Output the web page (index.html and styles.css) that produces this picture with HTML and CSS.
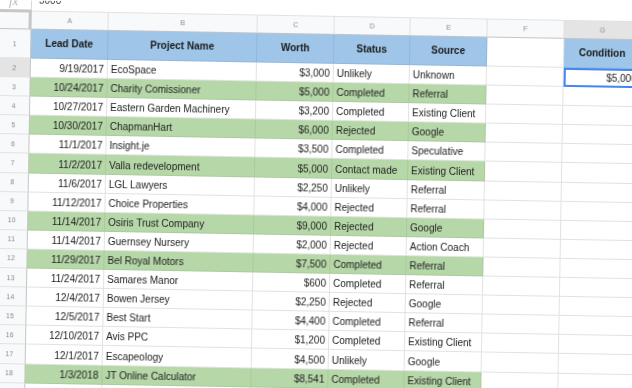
FILE: index.html
```html
<!DOCTYPE html>
<html>
<head>
<meta charset="utf-8">
<link rel="stylesheet" href="styles.css">
</head>
<body>
<div class="page">
  <div class="formula">
    <span class="fx">fx</span>
    <span class="fsep"></span>
    <span class="fval">5000</span>
  </div>
  <div class="sheet">
    <div class="row colhead">
      <div class="corner"></div>
      <div class="ch">A</div><div class="ch">B</div><div class="ch">C</div><div class="ch">D</div><div class="ch">E</div><div class="ch">F</div><div class="ch sel">G</div><div class="ch">H</div>
    </div>
    <div class="row head">
      <div class="rh">1</div>
      <div class="c hb">Lead Date</div><div class="c hb">Project Name</div><div class="c hb">Worth</div><div class="c hb">Status</div><div class="c hb">Source</div><div class="c"></div><div class="c hb">Condition</div><div class="c"></div>
    </div>
    <div class="row">
      <div class="rh sel">2</div>
      <div class="c r">9/19/2017</div><div class="c">EcoSpace</div><div class="c r">$3,000</div><div class="c">Unlikely</div><div class="c">Unknown</div><div class="c"></div><div class="c r cur">$5,000</div><div class="c"></div>
    </div>
    <div class="row">
      <div class="rh">3</div>
      <div class="c r g">10/24/2017</div><div class="c g">Charity Comissioner</div><div class="c r g">$5,000</div><div class="c g">Completed</div><div class="c g">Referral</div><div class="c"></div><div class="c"></div><div class="c"></div>
    </div>
    <div class="row">
      <div class="rh">4</div>
      <div class="c r">10/27/2017</div><div class="c">Eastern Garden Machinery</div><div class="c r">$3,200</div><div class="c">Completed</div><div class="c">Existing Client</div><div class="c"></div><div class="c"></div><div class="c"></div>
    </div>
    <div class="row">
      <div class="rh">5</div>
      <div class="c r g">10/30/2017</div><div class="c g">ChapmanHart</div><div class="c r g">$6,000</div><div class="c g">Rejected</div><div class="c g">Google</div><div class="c"></div><div class="c"></div><div class="c"></div>
    </div>
    <div class="row">
      <div class="rh">6</div>
      <div class="c r">11/1/2017</div><div class="c">Insight.je</div><div class="c r">$3,500</div><div class="c">Completed</div><div class="c">Speculative</div><div class="c"></div><div class="c"></div><div class="c"></div>
    </div>
    <div class="row">
      <div class="rh">7</div>
      <div class="c r g">11/2/2017</div><div class="c g">Valla redevelopment</div><div class="c r g">$5,000</div><div class="c g">Contact made</div><div class="c g">Existing Client</div><div class="c"></div><div class="c"></div><div class="c"></div>
    </div>
    <div class="row">
      <div class="rh">8</div>
      <div class="c r">11/6/2017</div><div class="c">LGL Lawyers</div><div class="c r">$2,250</div><div class="c">Unlikely</div><div class="c">Referral</div><div class="c"></div><div class="c"></div><div class="c"></div>
    </div>
    <div class="row">
      <div class="rh">9</div>
      <div class="c r">11/12/2017</div><div class="c">Choice Properties</div><div class="c r">$4,000</div><div class="c">Rejected</div><div class="c">Referral</div><div class="c"></div><div class="c"></div><div class="c"></div>
    </div>
    <div class="row">
      <div class="rh">10</div>
      <div class="c r g">11/14/2017</div><div class="c g">Osiris Trust Company</div><div class="c r g">$9,000</div><div class="c g">Rejected</div><div class="c g">Google</div><div class="c"></div><div class="c"></div><div class="c"></div>
    </div>
    <div class="row">
      <div class="rh">11</div>
      <div class="c r">11/14/2017</div><div class="c">Guernsey Nursery</div><div class="c r">$2,000</div><div class="c">Rejected</div><div class="c">Action Coach</div><div class="c"></div><div class="c"></div><div class="c"></div>
    </div>
    <div class="row">
      <div class="rh">12</div>
      <div class="c r g">11/29/2017</div><div class="c g">Bel Royal Motors</div><div class="c r g">$7,500</div><div class="c g">Completed</div><div class="c g">Referral</div><div class="c"></div><div class="c"></div><div class="c"></div>
    </div>
    <div class="row">
      <div class="rh">13</div>
      <div class="c r">11/24/2017</div><div class="c">Samares Manor</div><div class="c r">$600</div><div class="c">Completed</div><div class="c">Referral</div><div class="c"></div><div class="c"></div><div class="c"></div>
    </div>
    <div class="row">
      <div class="rh">14</div>
      <div class="c r">12/4/2017</div><div class="c">Bowen Jersey</div><div class="c r">$2,250</div><div class="c">Rejected</div><div class="c">Google</div><div class="c"></div><div class="c"></div><div class="c"></div>
    </div>
    <div class="row">
      <div class="rh">15</div>
      <div class="c r">12/5/2017</div><div class="c">Best Start</div><div class="c r">$4,400</div><div class="c">Completed</div><div class="c">Referral</div><div class="c"></div><div class="c"></div><div class="c"></div>
    </div>
    <div class="row">
      <div class="rh">16</div>
      <div class="c r">12/10/2017</div><div class="c">Avis PPC</div><div class="c r">$1,200</div><div class="c">Completed</div><div class="c">Existing Client</div><div class="c"></div><div class="c"></div><div class="c"></div>
    </div>
    <div class="row">
      <div class="rh">17</div>
      <div class="c r">12/1/2017</div><div class="c">Escapeology</div><div class="c r">$4,500</div><div class="c">Unlikely</div><div class="c">Google</div><div class="c"></div><div class="c"></div><div class="c"></div>
    </div>
    <div class="row">
      <div class="rh">18</div>
      <div class="c r g">1/3/2018</div><div class="c g">JT Online Calculator</div><div class="c r g">$8,541</div><div class="c g">Completed</div><div class="c g">Existing Client</div><div class="c"></div><div class="c"></div><div class="c"></div>
    </div>
    <div class="row">
      <div class="rh">19</div>
      <div class="c"></div><div class="c"></div><div class="c"></div><div class="c"></div><div class="c"></div><div class="c"></div><div class="c"></div><div class="c"></div>
    </div>
  </div>
</div>
</body>
</html>
```
FILE: styles.css
```css
html, body {
  margin: 0;
  padding: 0;
  background: #ffffff;
  overflow: hidden;
}
body {
  width: 632px;
  height: 388px;
  font-family: "Liberation Sans", Arial, sans-serif;
  color: #222222;
}
.page {
  width: 700px;
  transform: rotate(1deg);
  transform-origin: 0 0;
  filter: blur(0.3px);
}
.formula {
  height: 10px;
  display: flex;
  align-items: flex-start;
  overflow: hidden;
  border-bottom: 1px solid #e2e2e2;
}
.fx {
  font-family: "Liberation Serif", serif;
  font-style: italic;
  font-size: 13px;
  line-height: 12px;
  color: #b8b8b8;
  margin: -5px 0 0 9px;
  width: 22px;
}
.fsep {
  width: 1px;
  height: 10px;
  background: #d8d8d8;
}
.fval {
  font-size: 10px;
  line-height: 12px;
  margin: -6px 0 0 7px;
  color: #333;
}
.sheet {
  display: flex;
  flex-direction: column;
}
.row {
  display: grid;
  grid-template-columns: 32px 77px 149px 77px 76px 77px 77px 77px 77px;
  height: 19.1px;
}
.row.colhead {
  height: 18px;
}
.row.head {
  height: 29px;
}
.corner {
  box-sizing: border-box;
  background: #f8f9fa;
  border-top: 3px solid #c6c6c6;
  border-right: 3px solid #c6c6c6;
  border-bottom: 1px solid #c4c4c4;
  margin-top: -2px;
}
.ch {
  box-sizing: border-box;
  background: #f8f9fa;
  border-right: 1px solid #e0e0e0;
  border-bottom: 1px solid #c4c4c4;
  font-size: 7px;
  color: #8a8a8a;
  display: flex;
  align-items: center;
  justify-content: center;
}
.ch.sel {
  background: #e4e4e4;
}
.rh {
  box-sizing: border-box;
  background: #f8f9fa;
  border-right: 1px solid #c4c4c4;
  border-bottom: 1px solid #e2e2e2;
  font-size: 7px;
  color: #8a8a8a;
  display: flex;
  align-items: center;
  justify-content: center;
}
.rh.sel {
  background: #e4e4e4;
}
.c {
  box-sizing: border-box;
  border-right: 1px solid #e2e2e2;
  border-bottom: 1px solid #e2e2e2;
  font-size: 10px;
  line-height: 12px;
  padding: 0 3px 2px 3px;
  display: flex;
  align-items: flex-end;
  white-space: nowrap;
  overflow: hidden;
}
.c.r {
  justify-content: flex-end;
}
.c.hb {
  background: #9fc5e8;
  border-color: #8fb8df;
  font-weight: bold;
  color: #1a1a1a;
  align-items: center;
  justify-content: center;
  padding-bottom: 0;
}
.c.g {
  background: #b6d7a8;
  border-color: #a9cc9a;
}
.c.cur {
  border: 2px solid #4285f4;
  padding-bottom: 1px;
  padding-right: 2px;
}
```
